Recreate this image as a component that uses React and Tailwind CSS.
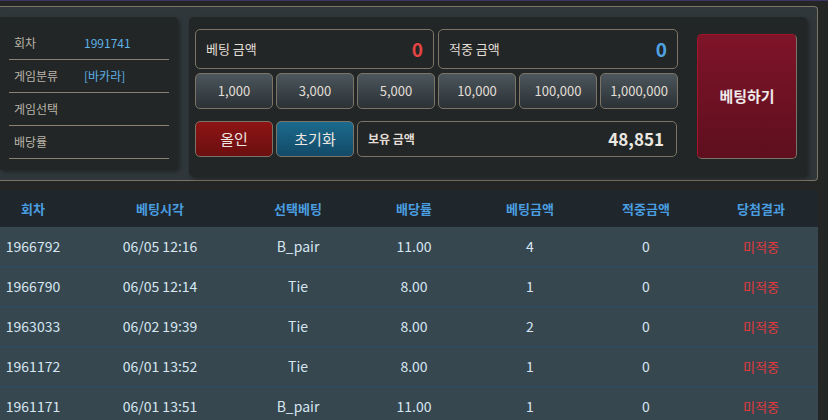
import React from "react";

const font = { fontFamily: '"Noto Sans CJK KR", "Noto Sans", sans-serif' };

const rows = [
  ["1966792", "06/05 12:16", "B_pair", "11.00", "4", "0"],
  ["1966790", "06/05 12:14", "Tie", "8.00", "1", "0"],
  ["1963033", "06/02 19:39", "Tie", "8.00", "2", "0"],
  ["1961172", "06/01 13:52", "Tie", "8.00", "1", "0"],
  ["1961171", "06/01 13:51", "B_pair", "11.00", "1", "0"],
];

const chips = ["1,000", "3,000", "5,000", "10,000", "100,000", "1,000,000"];

const gridCols = "grid grid-cols-[66px_174px_116px_116px_116px_116px_114px]";

export default function App() {
  return (
    <div className="min-h-[420px] w-[828px] bg-[#242626] font-['Noto_Sans_CJK_KR',sans-serif]" style={font}>
      <div className="h-px bg-[#3d3463]" />
      <div className="pt-[5px] pr-[10px]">
        {/* top panel */}
        <div className="flex items-start gap-[11px] border border-l-0 border-[#7c7466] rounded-r-[4px] bg-[#30373a] pt-[10px] pr-[10px] pb-[2px] h-[175px]">
          {/* left info */}
          <div className="w-[178px] h-[153px] bg-[#222626] rounded-r-[5px] px-[9px] pt-[10px] shadow-[2px_2px_4px_rgba(0,0,0,0.35)]">
            {[
              ["회차", "1991741"],
              ["게임분류", "[바카라]"],
              ["게임선택", ""],
              ["배당률", ""],
            ].map(([l, v]) => (
              <div key={l} className="flex items-center h-[33px] border-b border-[#8b8170] text-[12px]">
                <span className="w-[75px] pl-[5px] text-[#b9b4a9]">{l}</span>
                <span className="text-[#5fb1e6]">{v}</span>
              </div>
            ))}
          </div>
          {/* middle */}
          <div className="flex-1 h-[160px] bg-[#222626] rounded-[5px] pl-[6px] pt-[12px] flex items-start shadow-[2px_2px_4px_rgba(0,0,0,0.35)]">
            <div className="w-[483px] flex flex-col">
              <div className="flex gap-[4px]">
                <div className="w-[239px] h-[40px] border border-[#7c7466] rounded-[5px] flex items-center justify-between px-[10px]">
                  <span className="text-[13px] text-[#e2ded6]">베팅 금액</span>
                  <span className="text-[19px] font-bold text-[#e34444]">0</span>
                </div>
                <div className="w-[240px] h-[40px] border border-[#7c7466] rounded-[5px] flex items-center justify-between px-[10px]">
                  <span className="text-[13px] text-[#e2ded6]">적중 금액</span>
                  <span className="text-[19px] font-bold text-[#4fa3e3]">0</span>
                </div>
              </div>
              <div className="flex gap-[3px] mt-[4px]">
                {chips.map((c) => (
                  <div
                    key={c}
                    className="w-[78px] h-[36px] border border-[#7c7466] rounded-[5px] bg-gradient-to-b from-[#4c565c] to-[#2b3236] flex items-center justify-center text-[13px] text-[#e2ded6]"
                  >
                    {c}
                  </div>
                ))}
              </div>
              <div className="flex gap-[3px] mt-[12px]">
                <div className="w-[78px] h-[36px] border border-[#7c7466] rounded-[5px] bg-gradient-to-b from-[#8e1414] to-[#6b0f10] flex items-center justify-center text-[15px] text-[#ece8e2]">
                  올인
                </div>
                <div className="w-[78px] h-[36px] border border-[#7c7466] rounded-[5px] bg-gradient-to-b from-[#1c6a8d] to-[#134a68] flex items-center justify-center text-[15px] text-[#ece8e2]">
                  초기화
                </div>
                <div className="w-[320px] h-[36px] border border-[#7c7466] rounded-[5px] flex items-center justify-between pl-[10px] pr-[12px]">
                  <span className="text-[12px] font-bold text-[#e2ded6]">보유 금액</span>
                  <span className="text-[17px] font-bold text-[#ece8e2]">48,851</span>
                </div>
              </div>
            </div>
            <div className="ml-[19px] mt-[5px] w-[100px] h-[125px] rounded-[5px] border border-[#7c7466] border-t-[#a3162a] border-l-[#a3162a] bg-gradient-to-b from-[#7f1429] to-[#5e0f1e] flex items-center justify-center text-[15px] font-bold text-[#efe9ea]">
              베팅하기
            </div>
          </div>
        </div>
        {/* table */}
        <div className="mt-[9px] w-[818px] text-[14px]">
          <div className={`${gridCols} h-[37px] bg-[#1f262c] items-center text-[13px] font-bold text-[#4a9ee0]`}>
            <div className="text-center">회차</div>
            <div className="text-center pl-[14px]">베팅시각</div>
            <div className="text-center">선택베팅</div>
            <div className="text-center">배당률</div>
            <div className="text-center">베팅금액</div>
            <div className="text-center">적중금액</div>
            <div className="text-center">당첨결과</div>
          </div>
          {rows.map((r) => (
            <div key={r[0]} className={`${gridCols} h-[40px] bg-[#37474f] border-b border-[#2c4d66] items-center text-[#d6e6f2]`}>
              <div className="text-center">{r[0]}</div>
              <div className="text-center pl-[14px]">{r[1]}</div>
              <div className="text-center">{r[2]}</div>
              <div className="text-center">{r[3]}</div>
              <div className="text-center">{r[4]}</div>
              <div className="text-center">{r[5]}</div>
              <div className="text-center text-[13px] text-[#e2383b]">미적중</div>
            </div>
          ))}
        </div>
      </div>
    </div>
  );
}
